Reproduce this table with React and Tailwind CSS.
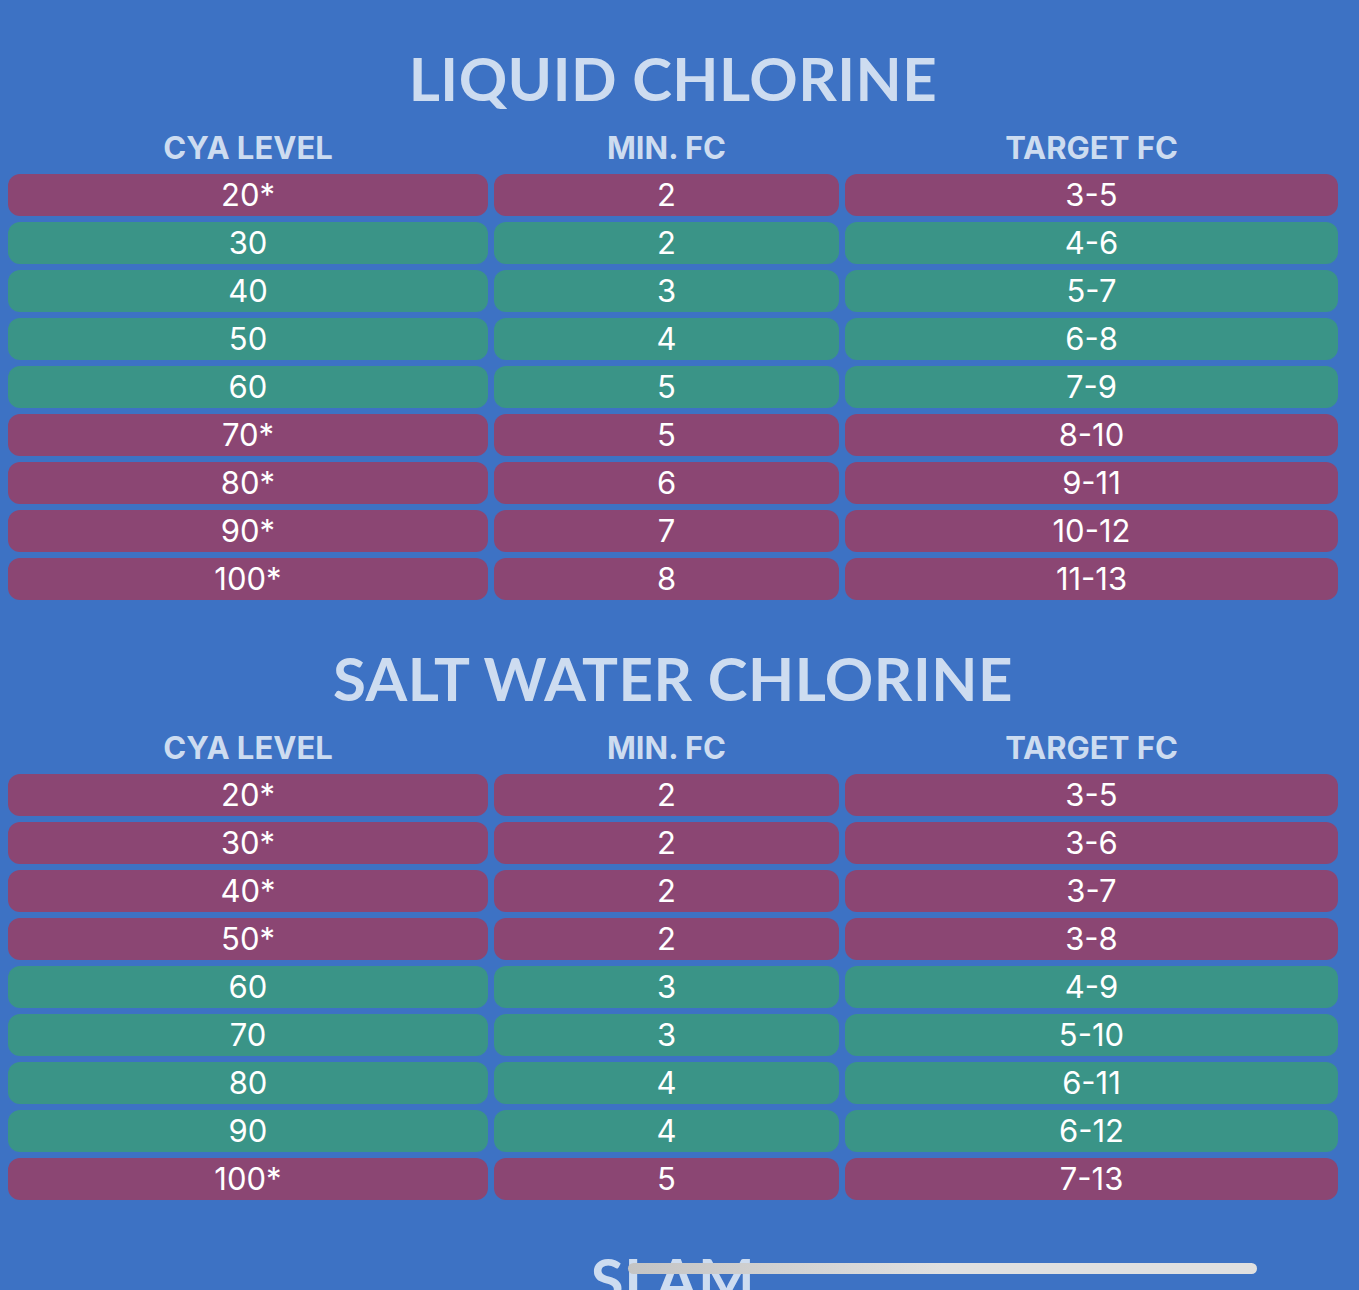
import React from "react";

const liquid = [
  ["20*", "2", "3-5", true],
  ["30", "2", "4-6", false],
  ["40", "3", "5-7", false],
  ["50", "4", "6-8", false],
  ["60", "5", "7-9", false],
  ["70*", "5", "8-10", true],
  ["80*", "6", "9-11", true],
  ["90*", "7", "10-12", true],
  ["100*", "8", "11-13", true],
];

const salt = [
  ["20*", "2", "3-5", true],
  ["30*", "2", "3-6", true],
  ["40*", "2", "3-7", true],
  ["50*", "2", "3-8", true],
  ["60", "3", "4-9", false],
  ["70", "3", "5-10", false],
  ["80", "4", "6-11", false],
  ["90", "4", "6-12", false],
  ["100*", "5", "7-13", true],
];

const Title = ({ children }) => (
  <h2 className="h-[64px] text-center text-[60px] font-bold leading-[64px] tracking-[0.5px] text-[#cddcf0] [font-family:Lato,'Open_Sans',sans-serif]">
    {children}
  </h2>
);

const Cell = ({ warn, children }) => (
  <div
    className={
      "flex h-[42px] items-center justify-center rounded-[12px] text-[31px] text-white " +
      (warn ? "bg-[#8b4673]" : "bg-[#3a9487]")
    }
  >
    {children}
  </div>
);

const ChlorineTable = ({ title, rows }) => (
  <section className="pt-[46px]">
    <Title>{title}</Title>
    <div className="mt-[18px] grid grid-cols-[480px_345px_493px] gap-[6px] [font-family:Inter,'Liberation_Sans',sans-serif]">
      {["CYA LEVEL", "MIN. FC", "TARGET FC"].map((h) => (
        <div
          key={h}
          className="h-[40px] text-center text-[31px] font-bold leading-[40px] text-[#cddcf0]"
        >
          {h}
        </div>
      ))}
      {rows.map(([cya, min, target, warn]) => (
        <React.Fragment key={cya}>
          <Cell warn={warn}>{cya}</Cell>
          <Cell warn={warn}>{min}</Cell>
          <Cell warn={warn}>{target}</Cell>
        </React.Fragment>
      ))}
    </div>
  </section>
);

export default function App() {
  return (
    <div className="relative min-h-screen overflow-hidden bg-[#3d72c4]">
      <div className="w-[1346px] px-[8px]">
        <ChlorineTable title="LIQUID CHLORINE" rows={liquid} />
        <ChlorineTable title="SALT WATER CHLORINE" rows={salt} />
        <section className="pt-[47px]">
          <Title>SLAM</Title>
        </section>
      </div>
      {/* overlay scrollbar */}
      <div className="absolute left-[628px] top-[1263px] h-[11px] w-[629px] rounded-full bg-gradient-to-r from-[#c4c4c4] via-[#e0e0e0] to-[#e0e0e0]" />
    </div>
  );
}
